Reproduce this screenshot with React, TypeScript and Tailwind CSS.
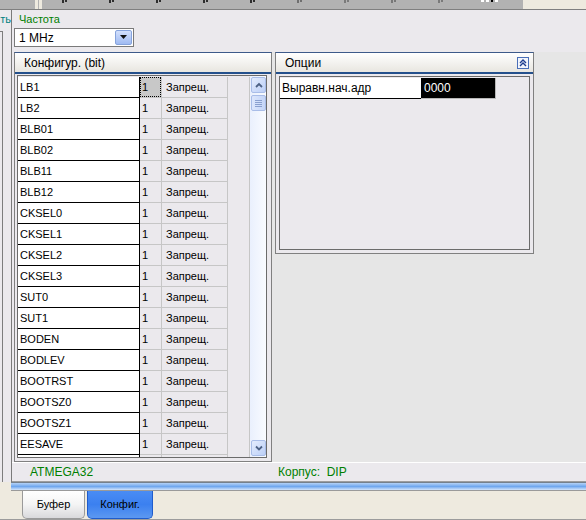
import React from 'react'

const ROWS = [
  'LB1', 'LB2', 'BLB01', 'BLB02', 'BLB11', 'BLB12',
  'CKSEL0', 'CKSEL1', 'CKSEL2', 'CKSEL3', 'SUT0', 'SUT1',
  'BODEN', 'BODLEV', 'BOOTRST', 'BOOTSZ0', 'BOOTSZ1', 'EESAVE',
]

// cropped toolbar glyphs peeking out at the top edge
const TOP_MARKS = ['#2e2e2e', '#2e2e2e', '#2e2e2e', '#2e2e2e', '#2e2e2e', '#6f6f6f', '#7a7a7a', '#777777', '#7a7a7a']

function PanelHeader({ title, collapse }: { title: string; collapse?: boolean }) {
  return (
    <div className="h-[21px] shrink-0 flex items-center justify-between pl-[9px] pr-[4px] bg-gradient-to-b from-white to-[#e8e6e0] border-b-2 border-[#24508c]">
      <span className="text-[12px] leading-none text-black">{title}</span>
      {collapse && (
        <div className="w-[12px] h-[12px] border border-[#4a6fb8] bg-[#f2f5fc] flex items-center justify-center">
          <svg width="8" height="8" viewBox="0 0 8 8" fill="none">
            <path d="M1 4 L4 1 L7 4" stroke="#1d3c8f" strokeWidth="1.4" />
            <path d="M1 7 L4 4 L7 7" stroke="#1d3c8f" strokeWidth="1.4" />
          </svg>
        </div>
      )}
    </div>
  )
}

function ScrollButton({ up }: { up?: boolean }) {
  return (
    <div className="w-[15px] h-[16px] shrink-0 ml-[1px] rounded-[2px] border border-[#a9bde8] bg-gradient-to-br from-[#e4ecfd] to-[#bccff7] flex items-center justify-center">
      <svg width="8" height="6" viewBox="0 0 8 6" fill="none">
        {up ? (
          <path d="M1 5 L4 2 L7 5" stroke="#4d6185" strokeWidth="1.8" />
        ) : (
          <path d="M1 1.5 L4 4.5 L7 1.5" stroke="#4d6185" strokeWidth="1.8" />
        )}
      </svg>
    </div>
  )
}

function ConfigRow({ name, focused }: { name: string; focused?: boolean }) {
  return (
    <div className="h-[21px] shrink-0 flex">
      <div className="w-[122px] bg-white border-r border-b border-black pl-[2px] flex items-center leading-none">
        {name}
      </div>
      <div className="w-[22px] border-r border-b border-[#c6c6c6] flex">
        {focused ? (
          <div className="flex-1 bg-[#c8c8c8] border border-dotted border-black flex items-center pl-[1px] leading-none">1</div>
        ) : (
          <div className="flex-1 flex items-center pl-[2px] leading-none">{name ? '1' : ''}</div>
        )}
      </div>
      <div className="w-[66px] border-r border-b border-[#c6c6c6] pl-[4px] flex items-center leading-none">
        {name ? 'Запрещ.' : ''}
      </div>
      <div className="w-[22px] border-r border-[#c6c6c6]" />
    </div>
  )
}

export default function App() {
  return (
    <div className="w-[586px] h-[520px] overflow-hidden flex flex-col bg-[#ebe9ed] font-['Liberation_Sans',Arial,sans-serif] text-[11px] text-black">
      {/* top strip (cropped toolbar) */}
      <div className="h-[10px] flex shrink-0 border-b border-[#7f7f7f]">
        <div className="w-[523px] flex bg-[#b2b2b2]">
          <div className="w-[35px]" />
          <div className="w-[3px] bg-[#eeeadf]" />
          <div className="w-[1px]" />
          <div className="w-[3px] bg-[#eeeadf]" />
          <div className="w-[20px]" />
          {TOP_MARKS.map((c, i) => (
            <div key={i} className="w-[47px] flex justify-start">
              <div className="flex gap-[1px] h-[3px]">
                <div className="w-[2px] h-[3px]" style={{ background: c }} />
                <div className="w-[2px] h-[2px]" style={{ background: c }} />
              </div>
            </div>
          ))}
          <div className="flex gap-[2px] h-[3px] ml-[-4px]">
            <div className="w-[3px] h-[2px] bg-white" />
            <div className="w-[3px] h-[2px] bg-white" />
            <div className="w-[2px] h-[2px] bg-black" />
            <div className="w-[3px] h-[2px] bg-white" />
          </div>
        </div>
        <div className="flex-1 bg-[#eeeadf]" />
      </div>

      {/* middle */}
      <div className="h-[472px] flex shrink-0">
        {/* left neighbour panel, cut off */}
        <div className="w-[11px] flex flex-col overflow-hidden bg-[#ebe9ed]">
          <div className="h-[21px] pt-[3px] flex justify-end">
            <span className="text-[11px] leading-[13px] text-[#008080] whitespace-nowrap">ть</span>
          </div>
          <div className="w-[3px] flex-1 border-t border-r border-[#7d7d7d]" />
        </div>

        {/* main */}
        <div className="flex-1 min-w-0 flex flex-col border-l border-[#7a7a7a]">
          <div className="pt-[3px] pl-[7px] leading-[13px] text-[#008000] shrink-0">Частота</div>

          <div className="mt-[2px] ml-[2px] w-[120px] h-[19px] shrink-0 border border-[#7a7a7a] bg-white flex items-center">
            <span className="flex-1 pl-[4px] leading-none text-[12px]">1 MHz</span>
            <div className="w-[17px] h-[15px] mr-[1px] rounded-[2px] border border-[#86a3dc] bg-gradient-to-b from-[#d3e0fc] to-[#9fbaf2] flex items-center justify-center">
              <svg width="7" height="5" viewBox="0 0 7 5">
                <path d="M0 0 H7 L3.5 4 Z" fill="#111" />
              </svg>
            </div>
          </div>

          {/* panels */}
          <div className="mt-[5px] h-[410px] shrink-0 flex">
            {/* Конфигур. panel */}
            <div className="ml-[2px] w-[258px] h-[410px] flex flex-col border-x border-b border-t border-[#808080] border-t-[#3d5a8a]">
              <PanelHeader title="Конфигур. (bit)" />
              <div className="flex-1 min-h-0 flex flex-col pt-[1px] pl-[2px] pr-[4px] pb-[3px]">
                <div className="flex-1 min-h-0 flex border border-[#6b6b6b] overflow-hidden">
                  <div className="w-[232px] flex flex-col pt-[1px] overflow-hidden">
                    {ROWS.map((name, i) => (
                      <ConfigRow key={name} name={name} focused={i === 0} />
                    ))}
                    <ConfigRow name="" />
                  </div>
                  <div className="w-[16px] flex flex-col bg-gradient-to-r from-[#eaf0fd] to-[#f9fbff] pt-[1px] pb-[1px]">
                    <ScrollButton up />
                    <div className="mt-[2px] ml-[1px] w-[15px] h-[16px] shrink-0 rounded-[2px] border border-[#a9bde8] bg-gradient-to-r from-[#dce6fc] to-[#c4d5f8] flex flex-col items-center justify-center gap-[1px]">
                      <div className="w-[7px] h-[1px] bg-[#8aa0cf]" />
                      <div className="w-[7px] h-[1px] bg-[#8aa0cf]" />
                      <div className="w-[7px] h-[1px] bg-[#8aa0cf]" />
                      <div className="w-[7px] h-[1px] bg-[#8aa0cf]" />
                    </div>
                    <div className="flex-1" />
                    <ScrollButton />
                  </div>
                </div>
              </div>
            </div>

            {/* right column */}
            <div className="flex-1 bg-[#e6e6e6] pl-[3px]">
              <div className="w-[259px] h-[202px] flex flex-col border-x border-b border-t border-[#808080] border-t-[#3d5a8a] bg-[#ebe9ed]">
                <PanelHeader title="Опции" collapse />
                <div className="flex-1 min-h-0 flex flex-col pt-[2px] px-[3px] pb-[3px]">
                  <div className="flex-1 border border-[#6b6b6b] pt-[1px]">
                    <div className="h-[21px] flex">
                      <div className="w-[141px] bg-white border-b border-black pl-[2px] flex items-center leading-none text-[12px]">
                        Выравн.нач.адр
                      </div>
                      <div className="w-[75px] bg-black text-white border-r border-b border-[#b8b8b8] pl-[3px] flex items-center leading-none text-[12px]">
                        0000
                      </div>
                    </div>
                  </div>
                </div>
              </div>
            </div>
          </div>

          {/* status */}
          <div className="h-[20px] shrink-0 flex items-center border-t border-white border-b border-b-[#9d9d9d] text-[#008000] text-[12px]">
            <span className="ml-[18px] w-[248px] leading-none">ATMEGA32</span>
            <span className="leading-none">Корпус:&nbsp; DIP</span>
          </div>
        </div>
      </div>

      {/* bottom tabs */}
      <div className="flex-1 flex flex-col bg-[#eeeadf] border-b border-[#9c9c9c]">
        <div className="flex h-[9px] shrink-0">
          <div className="w-[11px]" />
          <div className="flex-1 border-t border-[#74808c] border-b border-b-[#9a9a9a] bg-gradient-to-b from-[#b4d2f6] via-[#6fa7ee] to-[#d3e5fa]" />
        </div>
        <div className="flex-1 flex">
          <div className="ml-[22px] w-[63px] rounded-b-[5px] border border-t-0 border-[#9a9a9a] bg-gradient-to-b from-white via-[#f4f4f4] to-[#d9d9dc] flex items-center justify-center leading-none">
            Буфер
          </div>
          <div className="ml-[2px] w-[66px] rounded-b-[5px] border border-t-0 border-[#1f5ccc] bg-gradient-to-b from-[#4a8cf4] via-[#3b80f0] to-[#5c98f0] flex items-center justify-center leading-none">
            Конфиг.
          </div>
        </div>
      </div>
    </div>
  )
}
